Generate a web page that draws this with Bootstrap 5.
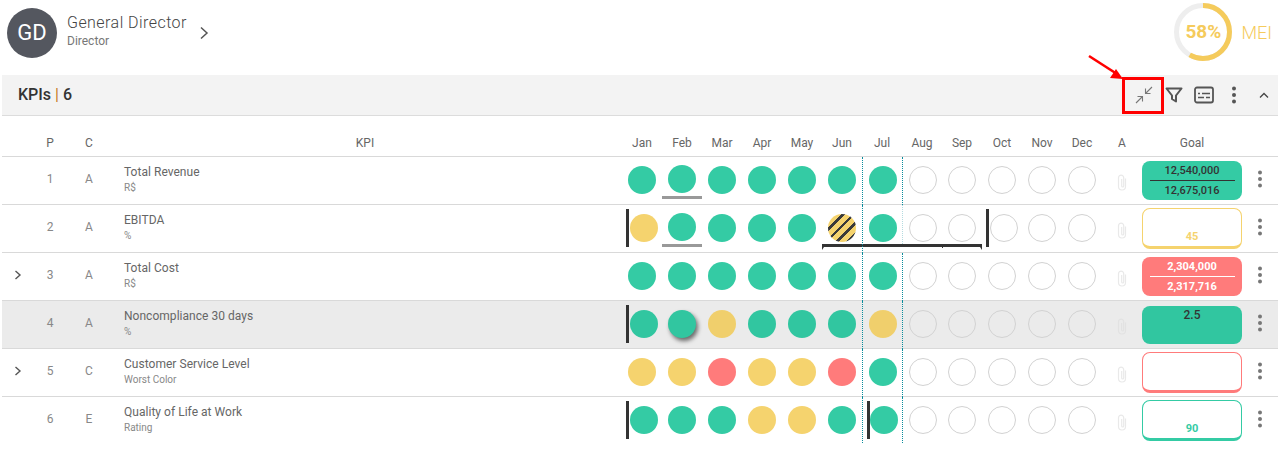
<!DOCTYPE html>
<html lang="en">
<head>
<meta charset="utf-8">
<title>KPIs</title>
<link href="https://cdn.jsdelivr.net/npm/bootstrap@5.3.0/dist/css/bootstrap.min.css" rel="stylesheet">
<style>
body{font-family:Roboto,"Liberation Sans",sans-serif;background:#fff;margin:0;overflow:hidden}
.page-wrap{padding:0 9px 0 2px}
.top-head{height:75px}
.ava{width:50px;height:50px;margin:8px 0 0 5px;background:#54575f;color:#fff;font-size:22px;line-height:50px}
.who{margin:13px 0 0 10px}
.who-name{font-size:16px;font-weight:300;line-height:20px;color:#444;letter-spacing:.45px}
.who-role{font-size:12px;line-height:13px;margin-top:2px;color:#777}
.who-go{margin:25px 0 0 11px;color:#555}
.mei{margin:3px 6px 0 0}
.donut{width:58px;height:58px}
.donut-val{font-size:19px;font-weight:700;color:#f5cb5c}
.mei-lab{font-size:18px;font-weight:300;color:#f5cb5c;margin-left:9px}
.kpi-bar{height:41px;background:#f3f3f3;border-bottom:1px solid #dcdcdc;padding-left:16px}
.kpi-ttl{font-size:16px;font-weight:500;color:#333;line-height:20px}
.kpi-sep{color:#c77a1e;font-weight:400}
.tool{width:30px;height:40px;color:#555}
.tool-end{width:29px}
.red-box{left:1119.5px;top:2px;width:42px;height:37px;border:3px solid #f00}
.red-arrow{left:1085px;top:-21px}
.grid-row{display:grid;grid-template-columns:28px 40px 38px 514px repeat(12,40px) 40px 100px 36px;height:48px;border-bottom:1px solid #d9d9d9;font-size:12px;color:#888}
.grid-head{height:41px;color:#666}
.grid-head>div{padding-top:19px;line-height:16px;text-align:center}
.grid-last{border-bottom:0;height:47px}
.row-hi{background:#ebebeb}
.cell-n{padding-top:14px;line-height:16px;text-align:center}
.cell-chev{padding:17px 0 0 11px;color:#555}
.cell-chev svg{display:block}
.kpi-n{padding:7px 0 0 16px}
.kpi-main{font-size:12px;font-weight:400;line-height:16px;color:#666;letter-spacing:.03px}
.kpi-sub{font-size:10px;line-height:14px;margin-top:1px;color:#888}
.mon{position:relative;display:flex;justify-content:center;align-items:flex-start;padding-top:9px}
.mon-up{padding-top:8px}
.sh2{padding-left:2px}
.sh4{padding-left:4px}
.dot{width:28px;height:28px;border-radius:50%;flex:none}
.c-g{background:#34cba4}
.c-y{background:#f5d36e}
.c-r{background:#ff7b7b}
.c-e{border:1px solid #d2d2d2}
.row-hi .c-g{background:#31c6a0}
.row-hi .c-y{background:#f0cf6c}
.c-h{background:repeating-linear-gradient(-45deg,#f5d36e 0 5px,#3a3a3a 5px 7.5px)}
.lift{box-shadow:2px 3px 4px rgba(0,0,0,.55)}
.mark-l::after{content:"";position:absolute;left:4px;top:4px;width:3px;height:38px;background:#333}
.mark-l5::after{left:5px}
.mark-u::after{content:"";position:absolute;left:0;right:0;top:39px;height:3px;background:#999}
.vd::before{content:"";position:absolute;left:0;top:0;bottom:-1px;border-left:1px dotted #0a8c9c;z-index:2}
.vd-fade::before{opacity:.3;bottom:8px}
.brk{position:absolute;left:0;top:39px;width:160px;height:6px;border-top:3px solid #333}
.brk::before,.brk::after{content:"";position:absolute;top:0;width:0;height:0;border-top:3px solid #333}
.brk::before{left:0;border-right:2px solid transparent}
.brk::after{right:0;border-left:2px solid transparent}
.brk-t{position:absolute;left:120px;top:0;width:1px;height:1px;background:#333}
.cell-a{padding-top:17px;color:#e9e9e9;text-align:center}
.row-hi .cell-a{color:#e2e2e2}
.cell-a svg{display:block;margin:0 auto}
.goal-c{padding-top:4px}
.goal-p3{padding-top:3px}
.goal-p5{padding-top:5px}
.goal{border-radius:8px;font-size:11px;font-weight:500;text-align:center;line-height:19px}
.g-fill{height:39px}
.g-s38{height:38px}
.g-out{height:41px;background:#fff;border:1px solid;border-bottom-width:3px;font-weight:700;line-height:14px;padding-bottom:2px}
.g-g{background:#34cba4;color:#333}
.row-hi .g-g{background:#31c6a0}
.g-r{background:#ff7b7b;color:#fff;font-weight:700}
.g-o-y{border-color:#f5d36e;color:#f5d36e}
.g-o-r{border-color:#ff7b7b}
.g-o-g{border-color:#34cba4;color:#34cba4}
.g-line{height:1px;margin:0 7px 0 8px;background:currentColor}
.g-top{font-size:12px;line-height:14px;padding-top:2px}
.cell-k{padding-top:13px;color:#777}
.cell-k svg{display:block;margin:0 auto}
</style>
</head>
<body>
<div class="page-wrap">
  <div class="top-head d-flex justify-content-between align-items-start">
    <div class="d-flex align-items-start">
      <div class="ava rounded-circle text-center">GD</div>
      <div class="who">
        <div class="who-name">General Director</div>
        <div class="who-role">Director</div>
      </div>
      <svg class="who-go" width="12" height="16" viewBox="0 0 12 16"><path d="M3 2.500l6 5.500-6 5.500" fill="none" stroke="currentColor" stroke-width="1.500"/></svg>
    </div>
    <div class="mei d-flex align-items-center">
      <div class="donut position-relative">
        <svg width="58" height="58" viewBox="0 0 58 58"><circle cx="29" cy="29" r="26.500" fill="none" stroke="#eeeeee" stroke-width="5"/><circle cx="29" cy="29" r="26.500" fill="none" stroke="#f5cb5c" stroke-width="5" stroke-dasharray="96.600 170" transform="rotate(-90 29 29)"/></svg>
        <div class="donut-val position-absolute top-0 start-0 w-100 h-100 d-flex align-items-center justify-content-center">58%</div>
      </div>
      <div class="mei-lab">MEI</div>
    </div>
  </div>

  <div class="kpi-bar d-flex align-items-center position-relative">
    <div class="kpi-ttl">KPIs <span class="kpi-sep">|</span> 6</div>
    <div class="ms-auto d-flex align-items-center">
      <div class="tool d-flex align-items-center justify-content-center"><svg width="20" height="20" viewBox="0 0 20 20" fill="none" stroke="#777" stroke-width="1.100"><path d="M18 2l-6.500 6.500M11.500 3.500v5h5M2 18l6.500-6.500M3.500 11.500h5v5"/></svg></div>
      <div class="tool d-flex align-items-center justify-content-center"><svg width="18" height="18" viewBox="0 0 18 18" fill="none" stroke="#555" stroke-width="2" stroke-linejoin="round"><path d="M1.500 2.500h15l-5.500 7v6l-4-2.500v-3.500z"/></svg></div>
      <div class="tool d-flex align-items-center justify-content-center"><svg width="20" height="18" viewBox="0 0 20 18" fill="none" stroke="#555"><rect x="1" y="1.500" width="18" height="15" rx="2" stroke-width="1.800"/><path d="M4 7.500h2M8 7.500h8M4 11.500h6M12 11.500h4" stroke-width="1.600"/></svg></div>
      <div class="tool d-flex align-items-center justify-content-center"><svg width="6" height="18" viewBox="0 0 6 18" fill="#555"><circle cx="3" cy="2.500" r="2"/><circle cx="3" cy="9" r="2"/><circle cx="3" cy="15.500" r="2"/></svg></div>
      <div class="tool tool-end d-flex align-items-center justify-content-center"><svg width="10" height="7" viewBox="0 0 10 7" fill="none" stroke="#444" stroke-width="1.300"><path d="M1 5.500l4-4 4 4"/></svg></div>
    </div>
    <div class="red-box position-absolute"></div>
    <svg class="red-arrow position-absolute" width="38" height="26" viewBox="0 0 38 26"><path d="M2 2l28 18" stroke="#f00" stroke-width="2.600" fill="none"/><path d="M36 25l-13-1 6-9z" fill="#f00"/></svg>
  </div>

  <div class="grid-row grid-head">
    <div></div><div>P</div><div>C</div><div>KPI</div>
    <div>Jan</div><div>Feb</div><div>Mar</div><div>Apr</div><div>May</div><div>Jun</div><div>Jul</div><div>Aug</div><div>Sep</div><div>Oct</div><div>Nov</div><div>Dec</div>
    <div>A</div><div>Goal</div><div></div>
  </div>

  <!-- Row 1 -->
  <div class="grid-row">
    <div></div><div class="cell-n">1</div><div class="cell-n">A</div>
    <div class="kpi-n"><div class="kpi-main">Total Revenue</div><div class="kpi-sub">R$</div></div>
    <div class="mon"><i class="dot c-g"></i></div>
    <div class="mon mon-up mark-u"><i class="dot c-g"></i></div>
    <div class="mon"><i class="dot c-g"></i></div>
    <div class="mon"><i class="dot c-g"></i></div>
    <div class="mon"><i class="dot c-g"></i></div>
    <div class="mon"><i class="dot c-g"></i></div>
    <div class="mon sh2 vd"><i class="dot c-g"></i></div>
    <div class="mon sh2 vd"><i class="dot c-e"></i></div>
    <div class="mon"><i class="dot c-e"></i></div>
    <div class="mon"><i class="dot c-e"></i></div>
    <div class="mon"><i class="dot c-e"></i></div>
    <div class="mon"><i class="dot c-e"></i></div>
    <div class="cell-a"><svg width="10" height="17" viewBox="0 0 10 17" fill="none" stroke="currentColor" stroke-width="1.200"><path d="M8.500 4.500v8a3.500 3.500 0 0 1-7 0V3.800a2.600 2.600 0 0 1 5.200 0v8.200a1 1 0 0 1-2 0V5"/></svg></div>
    <div class="goal-c"><div class="goal g-fill g-g"><div>12,540,000</div><div class="g-line"></div><div>12,675,016</div></div></div>
    <div class="cell-k"><svg width="6" height="18" viewBox="0 0 6 18" fill="currentColor"><circle cx="3" cy="2.500" r="2"/><circle cx="3" cy="9" r="2"/><circle cx="3" cy="15.500" r="2"/></svg></div>
  </div>

  <!-- Row 2 -->
  <div class="grid-row">
    <div></div><div class="cell-n">2</div><div class="cell-n">A</div>
    <div class="kpi-n"><div class="kpi-main">EBITDA</div><div class="kpi-sub">%</div></div>
    <div class="mon sh4 mark-l"><i class="dot c-y"></i></div>
    <div class="mon mon-up mark-u"><i class="dot c-g"></i></div>
    <div class="mon"><i class="dot c-g"></i></div>
    <div class="mon"><i class="dot c-g"></i></div>
    <div class="mon"><i class="dot c-g"></i></div>
    <div class="mon"><i class="dot c-h"></i><div class="brk"><span class="brk-t"></span></div></div>
    <div class="mon sh2 vd"><i class="dot c-g"></i></div>
    <div class="mon sh2 vd vd-fade"><i class="dot c-e"></i></div>
    <div class="mon"><i class="dot c-e"></i></div>
    <div class="mon sh4 mark-l"><i class="dot c-e"></i></div>
    <div class="mon"><i class="dot c-e"></i></div>
    <div class="mon"><i class="dot c-e"></i></div>
    <div class="cell-a"><svg width="10" height="17" viewBox="0 0 10 17" fill="none" stroke="currentColor" stroke-width="1.200"><path d="M8.500 4.500v8a3.500 3.500 0 0 1-7 0V3.800a2.600 2.600 0 0 1 5.200 0v8.200a1 1 0 0 1-2 0V5"/></svg></div>
    <div class="goal-p3"><div class="goal g-out g-o-y d-flex flex-column justify-content-end">45</div></div>
    <div class="cell-k"><svg width="6" height="18" viewBox="0 0 6 18" fill="currentColor"><circle cx="3" cy="2.500" r="2"/><circle cx="3" cy="9" r="2"/><circle cx="3" cy="15.500" r="2"/></svg></div>
  </div>

  <!-- Row 3 -->
  <div class="grid-row">
    <div class="cell-chev"><svg width="10" height="10" viewBox="0 0 10 10" fill="none" stroke="currentColor" stroke-width="1.400"><path d="M2.500 1l4.500 4-4.500 4"/></svg></div>
    <div class="cell-n">3</div><div class="cell-n">A</div>
    <div class="kpi-n"><div class="kpi-main">Total Cost</div><div class="kpi-sub">R$</div></div>
    <div class="mon"><i class="dot c-g"></i></div>
    <div class="mon"><i class="dot c-g"></i></div>
    <div class="mon"><i class="dot c-g"></i></div>
    <div class="mon"><i class="dot c-g"></i></div>
    <div class="mon"><i class="dot c-g"></i></div>
    <div class="mon"><i class="dot c-g"></i></div>
    <div class="mon sh2 vd"><i class="dot c-g"></i></div>
    <div class="mon sh2 vd"><i class="dot c-e"></i></div>
    <div class="mon"><i class="dot c-e"></i></div>
    <div class="mon"><i class="dot c-e"></i></div>
    <div class="mon"><i class="dot c-e"></i></div>
    <div class="mon"><i class="dot c-e"></i></div>
    <div class="cell-a"><svg width="10" height="17" viewBox="0 0 10 17" fill="none" stroke="currentColor" stroke-width="1.200"><path d="M8.500 4.500v8a3.500 3.500 0 0 1-7 0V3.800a2.600 2.600 0 0 1 5.200 0v8.200a1 1 0 0 1-2 0V5"/></svg></div>
    <div class="goal-c"><div class="goal g-fill g-r"><div>2,304,000</div><div class="g-line"></div><div>2,317,716</div></div></div>
    <div class="cell-k"><svg width="6" height="18" viewBox="0 0 6 18" fill="currentColor"><circle cx="3" cy="2.500" r="2"/><circle cx="3" cy="9" r="2"/><circle cx="3" cy="15.500" r="2"/></svg></div>
  </div>

  <!-- Row 4 -->
  <div class="grid-row row-hi">
    <div></div><div class="cell-n">4</div><div class="cell-n">A</div>
    <div class="kpi-n"><div class="kpi-main">Noncompliance 30 days</div><div class="kpi-sub">%</div></div>
    <div class="mon sh4 mark-l"><i class="dot c-g"></i></div>
    <div class="mon"><i class="dot c-g lift"></i></div>
    <div class="mon"><i class="dot c-y"></i></div>
    <div class="mon"><i class="dot c-g"></i></div>
    <div class="mon"><i class="dot c-g"></i></div>
    <div class="mon"><i class="dot c-g"></i></div>
    <div class="mon sh2 vd"><i class="dot c-y"></i></div>
    <div class="mon sh2 vd"><i class="dot c-e"></i></div>
    <div class="mon"><i class="dot c-e"></i></div>
    <div class="mon"><i class="dot c-e"></i></div>
    <div class="mon"><i class="dot c-e"></i></div>
    <div class="mon"><i class="dot c-e"></i></div>
    <div class="cell-a"><svg width="10" height="17" viewBox="0 0 10 17" fill="none" stroke="currentColor" stroke-width="1.200"><path d="M8.500 4.500v8a3.500 3.500 0 0 1-7 0V3.800a2.600 2.600 0 0 1 5.200 0v8.200a1 1 0 0 1-2 0V5"/></svg></div>
    <div class="goal-p5"><div class="goal g-s38 g-g g-top">2.5</div></div>
    <div class="cell-k"><svg width="6" height="18" viewBox="0 0 6 18" fill="currentColor"><circle cx="3" cy="2.500" r="2"/><circle cx="3" cy="9" r="2"/><circle cx="3" cy="15.500" r="2"/></svg></div>
  </div>

  <!-- Row 5 -->
  <div class="grid-row">
    <div class="cell-chev"><svg width="10" height="10" viewBox="0 0 10 10" fill="none" stroke="currentColor" stroke-width="1.400"><path d="M2.500 1l4.500 4-4.500 4"/></svg></div>
    <div class="cell-n">5</div><div class="cell-n">C</div>
    <div class="kpi-n"><div class="kpi-main">Customer Service Level</div><div class="kpi-sub">Worst Color</div></div>
    <div class="mon"><i class="dot c-y"></i></div>
    <div class="mon"><i class="dot c-y"></i></div>
    <div class="mon"><i class="dot c-r"></i></div>
    <div class="mon"><i class="dot c-y"></i></div>
    <div class="mon"><i class="dot c-y"></i></div>
    <div class="mon"><i class="dot c-r"></i></div>
    <div class="mon sh2 vd"><i class="dot c-g"></i></div>
    <div class="mon sh2 vd"><i class="dot c-e"></i></div>
    <div class="mon"><i class="dot c-e"></i></div>
    <div class="mon"><i class="dot c-e"></i></div>
    <div class="mon"><i class="dot c-e"></i></div>
    <div class="mon"><i class="dot c-e"></i></div>
    <div class="cell-a"><svg width="10" height="17" viewBox="0 0 10 17" fill="none" stroke="currentColor" stroke-width="1.200"><path d="M8.500 4.500v8a3.500 3.500 0 0 1-7 0V3.800a2.600 2.600 0 0 1 5.200 0v8.200a1 1 0 0 1-2 0V5"/></svg></div>
    <div class="goal-p3"><div class="goal g-out g-o-r"></div></div>
    <div class="cell-k"><svg width="6" height="18" viewBox="0 0 6 18" fill="currentColor"><circle cx="3" cy="2.500" r="2"/><circle cx="3" cy="9" r="2"/><circle cx="3" cy="15.500" r="2"/></svg></div>
  </div>

  <!-- Row 6 -->
  <div class="grid-row grid-last">
    <div></div><div class="cell-n">6</div><div class="cell-n">E</div>
    <div class="kpi-n"><div class="kpi-main">Quality of Life at Work</div><div class="kpi-sub">Rating</div></div>
    <div class="mon sh4 mark-l"><i class="dot c-g"></i></div>
    <div class="mon"><i class="dot c-g"></i></div>
    <div class="mon"><i class="dot c-g"></i></div>
    <div class="mon"><i class="dot c-y"></i></div>
    <div class="mon"><i class="dot c-y"></i></div>
    <div class="mon"><i class="dot c-g"></i></div>
    <div class="mon sh4 mark-l mark-l5 vd"><i class="dot c-g"></i></div>
    <div class="mon sh2 vd"><i class="dot c-e"></i></div>
    <div class="mon"><i class="dot c-e"></i></div>
    <div class="mon"><i class="dot c-e"></i></div>
    <div class="mon"><i class="dot c-e"></i></div>
    <div class="mon"><i class="dot c-e"></i></div>
    <div class="cell-a"><svg width="10" height="17" viewBox="0 0 10 17" fill="none" stroke="currentColor" stroke-width="1.200"><path d="M8.500 4.500v8a3.500 3.500 0 0 1-7 0V3.800a2.600 2.600 0 0 1 5.200 0v8.200a1 1 0 0 1-2 0V5"/></svg></div>
    <div class="goal-p3"><div class="goal g-out g-o-g d-flex flex-column justify-content-end">90</div></div>
    <div class="cell-k"><svg width="6" height="18" viewBox="0 0 6 18" fill="currentColor"><circle cx="3" cy="2.500" r="2"/><circle cx="3" cy="9" r="2"/><circle cx="3" cy="15.500" r="2"/></svg></div>
  </div>
</div>
<script src="https://cdn.jsdelivr.net/npm/bootstrap@5.3.0/dist/js/bootstrap.bundle.min.js"></script>
</body>
</html>
